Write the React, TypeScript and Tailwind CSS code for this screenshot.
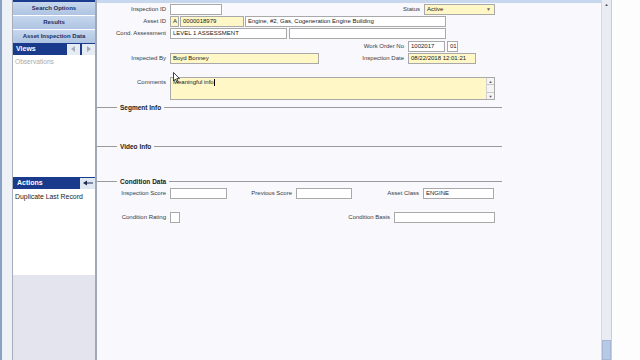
import React from 'react';

const font = { fontFamily: '"Liberation Sans", Arial, sans-serif' };

function Label({ className = '', children }: { className?: string; children?: React.ReactNode }) {
  return <div className={`shrink-0 text-right pr-[4px] text-[6px] leading-[11px] text-[#3a3a3a] whitespace-nowrap ${className}`}>
      {children}
    </div>;
}

function Box({ className = '', yellow, children }: { className?: string; yellow?: boolean; children?: React.ReactNode }) {
  return <div className={`shrink-0 h-[11px] border border-[#a9a9a9] px-[2px] text-[6px] leading-[9px] text-[#222] overflow-hidden whitespace-nowrap ${yellow ? 'bg-[#fff8c6]' : 'bg-white'} ${className}`}>
      {children}
    </div>;
}

function Section({ title, className = '' }: { title: string; className?: string }) {
  return <div className={`flex items-center w-[405px] h-[9px] ${className}`}>
      <div className="w-[20px] h-px bg-[#9a9a9a]" />
      <span className="px-[3px] text-[6.5px] font-bold text-[#222] leading-[9px]">{title}</span>
      <div className="flex-1 h-px bg-[#9a9a9a]" />
    </div>;
}

function NavButton({ children, className = '' }: { children: React.ReactNode; className?: string }) {
  return <div className={`flex items-center justify-center bg-gradient-to-b from-[#c6d7ed] to-[#aec4e2] border-b border-white text-[6px] font-bold text-[#1b2d63] ${className}`}>
      {children}
    </div>;
}

function Sidebar() {
  return <div className="w-[85px] shrink-0 flex flex-col border-l border-[#a8aeb9] border-r-2 border-r-[#a2a8b3]">
      <div className="h-[2px] bg-[#1b3b8c]" />
      <NavButton className="h-[14px]">Search Options</NavButton>
      <NavButton className="h-[14px]">Results</NavButton>
      <NavButton className="h-[13px] border-b-0">Asset Inspection Data</NavButton>
      <div className="h-[12px] bg-[#1a3a8b] flex items-center">
        <span className="pl-[3px] text-[7px] font-bold text-white">Views</span>
        <div className="ml-auto flex gap-[2px]">
          <div className="w-[13px] h-[11px] bg-[#e6ecf4] flex items-center justify-center">
            <svg width="5" height="6" viewBox="0 0 5 6"><path d="M4 0 L0 3 L4 6 Z" fill="#a7adb8" /></svg>
          </div>
          <div className="w-[13px] h-[11px] bg-[#e6ecf4] flex items-center justify-center">
            <svg width="5" height="6" viewBox="0 0 5 6"><path d="M1 0 L5 3 L1 6 Z" fill="#a7adb8" /></svg>
          </div>
        </div>
      </div>
      <div className="h-[122px] bg-white pl-[2px] pt-[2px] text-[6.6px] text-[#a9a9a9]">Observations</div>
      <div className="h-[12px] bg-[#1a3a8b] flex items-center">
        <span className="pl-[4px] text-[7px] font-bold text-white">Actions</span>
        <div className="ml-auto w-[15px] h-[11px] bg-[#dfe7f2] flex items-center justify-center">
          <svg width="10" height="6" viewBox="0 0 10 6">
            <path d="M0 3 L4 0.5 L4 5.5 Z" fill="#1e2a55" />
            <path d="M3 3 H10" stroke="#1e2a55" strokeWidth="1" />
          </svg>
        </div>
      </div>
      <div className="h-[86px] bg-white pl-[2px] pt-[3px] text-[6.9px] text-[#222]">Duplicate Last Record</div>
      <div className="flex-1 bg-[#e3e4ee]" />
    </div>;
}

function Form() {
  return <div className="relative flex-1 flex flex-col bg-[#f8f8fd]">
      <div className="h-[3px] bg-[#c7d8ee]" />

      <div className="mt-[1px] flex items-center h-[11px]">
        <Label className="w-[73px]">Inspection ID</Label>
        <Box className="w-[52px]" />
        <Label className="w-[202px]">Status</Label>
        <Box yellow className="w-[71px] relative">
          Active
          <span className="absolute right-[3px] top-0 text-[5px] text-[#666]">▼</span>
        </Box>
      </div>

      <div className="mt-[1px] flex items-center h-[11px]">
        <Label className="w-[73px]">Asset ID</Label>
        <Box yellow className="w-[9px]">A</Box>
        <Box yellow className="w-[64px] ml-[1px]">0000018979</Box>
        <Box className="w-[201px] ml-[1px]">Engine, #2, Gas, Cogeneration Engine Building</Box>
      </div>

      <div className="mt-[1px] flex items-center h-[11px]">
        <Label className="w-[73px]">Cond. Assessment</Label>
        <Box className="w-[117px]">LEVEL 1 ASSESSMENT</Box>
        <Box className="w-[157px] ml-[2px]" />
      </div>

      <div className="mt-[2px] flex items-center h-[11px]">
        <Label className="w-[311px]">Work Order No</Label>
        <Box className="w-[37px]">1002017</Box>
        <Box className="w-[11px] ml-[2px] px-[1px]">01</Box>
      </div>

      <div className="mt-[1px] flex items-center h-[11px]">
        <Label className="w-[73px]">Inspected By</Label>
        <Box yellow className="w-[149px]">Boyd Bonney</Box>
        <Label className="w-[89px]">Inspection Date</Label>
        <Box yellow className="w-[68px]">08/22/2018 12:01:21</Box>
      </div>

      <div className="mt-[13px] flex items-start">
        <Label className="w-[73px] pt-[-1px]">Comments</Label>
        <div className="relative w-[325px] h-[23px] border border-[#a9a9a9] bg-[#fff8c6] px-[2px] text-[6px] leading-[9px] text-[#222]">
          Meaningful info<span className="inline-block w-px h-[7px] bg-black align-middle" />
          <div className="absolute right-0 top-0 bottom-0 w-[8px] flex flex-col justify-between bg-[#f4f4f4] border-l border-[#d0d0d0]">
            <div className="h-[7px] border-b border-[#c8c8c8] flex items-center justify-center text-[4px] text-[#555]">▲</div>
            <div className="h-[7px] border-t border-[#c8c8c8] flex items-center justify-center text-[4px] text-[#555]">▼</div>
          </div>
        </div>
      </div>

      <Section title="Segment Info" className="mt-[3px]" />
      <Section title="Video Info" className="mt-[30px]" />
      <Section title="Condition Data" className="mt-[26px]" />

      <div className="mt-[2px] flex items-center h-[11px]">
        <Label className="w-[73px]">Inspection Score</Label>
        <Box className="w-[57px]" />
        <Label className="w-[69px]">Previous Score</Label>
        <Box className="w-[56px]" />
        <Label className="w-[71px]">Asset Class</Label>
        <Box className="w-[71px]">ENGINE</Box>
      </div>

      <div className="mt-[13px] flex items-center h-[11px]">
        <Label className="w-[73px]">Condition Rating</Label>
        <Box className="w-[10px] h-[10px]" />
        <Label className="w-[214px]">Condition Basis</Label>
        <Box className="w-[101px]" />
      </div>

      <svg className="absolute left-[76px] top-[72px]" width="7" height="11" viewBox="0 0 7 11">
        <path d="M0.5 0.5 L0.5 9 L2.5 7 L4 10.5 L5.3 10 L3.8 6.6 L6.5 6.6 Z" fill="white" stroke="#111" strokeWidth="0.8" />
      </svg>
    </div>;
}

export default function App() {
  return <div className="flex w-[640px] h-[360px] overflow-hidden bg-white" style={font}>
      <div className="w-[12px] shrink-0 bg-[#eef1f6] border-l-2 border-[#8aa2c4]" />
      <Sidebar />
      <Form />
      <div className="w-[10px] shrink-0 flex flex-col bg-[#e9edf3] border-l border-[#d3d9e2]">
        <div className="h-[9px] flex items-center justify-center text-[4px] text-[#444]">▲</div>
        <div className="flex-1" />
        <div className="h-[20px] bg-[#b7c9e4] border border-[#a5b9d6]" />
      </div>
      <div className="w-[29px] shrink-0 bg-[#fdfdfe] border-l border-[#c5ceda]" />
    </div>;
}
